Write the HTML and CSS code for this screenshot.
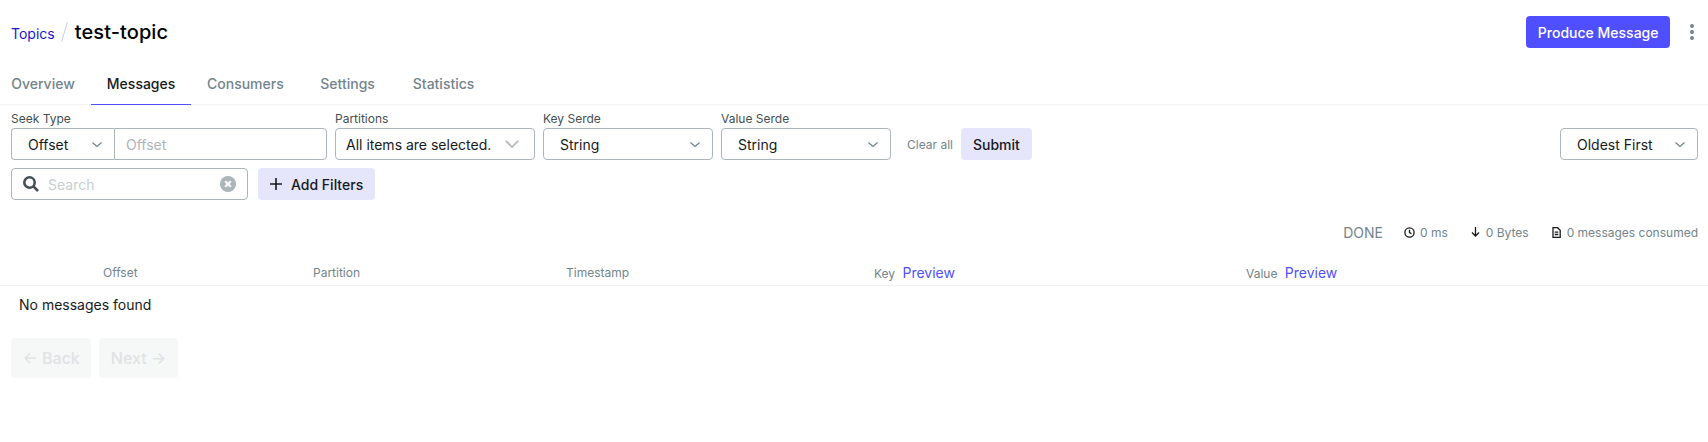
FILE: index.html
```html
<!DOCTYPE html>
<html lang="en">
<head>
    <meta charset="UTF-8">
    <title>test-topic - Messages</title>
    <link rel="stylesheet" href="styles.css">
</head>
<body>
    <header class="page-header">
        <div class="breadcrumb">
            <a class="breadcrumb-link" href="#">Topics</a>
            <span class="breadcrumb-sep"></span>
            <h1 class="page-title">test-topic</h1>
        </div>
        <div class="header-actions">
            <button class="btn btn-primary" type="button">Produce Message</button>
            <button class="kebab" type="button" aria-label="More">
                <svg width="4" height="16" viewBox="0 0 4 16"><circle cx="2" cy="2" r="2"/><circle cx="2" cy="8" r="2"/><circle cx="2" cy="14" r="2"/></svg>
            </button>
        </div>
    </header>

    <nav class="tabs">
        <a class="tab" href="#">Overview</a>
        <a class="tab active" href="#">Messages</a>
        <a class="tab" href="#">Consumers</a>
        <a class="tab" href="#">Settings</a>
        <a class="tab" href="#">Statistics</a>
    </nav>

    <form class="filters">
        <div class="filter-row">
            <div class="field">
                <label class="field-label">Seek Type</label>
                <div class="seek-group">
                    <div class="select seek-select">
                        <span class="select-value">Offset</span>
                        <svg class="chevron" width="10" height="5" viewBox="0 0 10 5"><path d="M.5.5 5 4.5 9.500.5"/></svg>
                    </div>
                    <div class="seek-input">Offset</div>
                </div>
            </div>
            <div class="field">
                <label class="field-label">Partitions</label>
                <div class="select partitions-select">
                    <span class="select-value">All items are selected.</span>
                    <svg class="chevron chevron-big" width="14" height="8" viewBox="0 0 14 8"><path d="M.7.7 7 7 13.300.7"/></svg>
                </div>
            </div>
            <div class="field">
                <label class="field-label">Key Serde</label>
                <div class="select serde-select">
                    <span class="select-value">String</span>
                    <svg class="chevron" width="10" height="5" viewBox="0 0 10 5"><path d="M.5.5 5 4.5 9.500.5"/></svg>
                </div>
            </div>
            <div class="field">
                <label class="field-label">Value Serde</label>
                <div class="select serde-select">
                    <span class="select-value">String</span>
                    <svg class="chevron" width="10" height="5" viewBox="0 0 10 5"><path d="M.5.5 5 4.5 9.500.5"/></svg>
                </div>
            </div>
            <a class="clear-all" href="#">Clear all</a>
            <button class="btn btn-secondary" type="button">Submit</button>
            <div class="select sort-select">
                <span class="select-value">Oldest First</span>
                <svg class="chevron" width="10" height="5" viewBox="0 0 10 5"><path d="M.5.5 5 4.5 9.500.5"/></svg>
            </div>
        </div>
        <div class="search-row">
            <div class="search">
                <svg class="search-icon" width="16" height="16" viewBox="0 0 16 16"><circle cx="6.500" cy="6.500" r="5.200"/><path d="M10.400 10.400 15 15"/></svg>
                <span class="search-placeholder">Search</span>
                <svg class="search-clear" width="16" height="16" viewBox="0 0 16 16"><circle cx="8" cy="8" r="8"/><path d="M5.200 5.200l5.600 5.600M10.800 5.200l-5.600 5.600"/></svg>
            </div>
            <button class="btn btn-secondary btn-add" type="button">
                <svg class="plus" width="12" height="12" viewBox="0 0 12 12"><path d="M6 0v12M0 6h12"/></svg>
                Add Filters
            </button>
        </div>
    </form>

    <div class="meta">
        <span class="meta-status">DONE</span>
        <span class="meta-item">
            <svg width="11" height="11" viewBox="0 0 11 11"><circle cx="5.500" cy="5.500" r="4.600"/><path d="M5.500 2.800v2.900l1.900 1"/></svg>
            0 ms
        </span>
        <span class="meta-item">
            <svg width="9" height="10" viewBox="0 0 9 10"><path d="M4.500 0v9M1 5.500 4.500 9 8 5.500"/></svg>
            0 Bytes
        </span>
        <span class="meta-item">
            <svg width="9" height="11" viewBox="0 0 9 11"><path d="M1 .7h4.600L8.200 3.300V10.300H1zM2.700 5.200h3.600M2.700 7.500h3.600"/></svg>
            0 messages consumed
        </span>
    </div>

    <table class="messages">
        <colgroup>
            <col class="col-toggle">
            <col class="col-offset">
            <col class="col-partition">
            <col class="col-timestamp">
            <col class="col-key">
            <col>
        </colgroup>
        <thead>
            <tr>
                <th></th>
                <th>Offset</th>
                <th>Partition</th>
                <th>Timestamp</th>
                <th>Key <a class="preview" href="#">Preview</a></th>
                <th>Value <a class="preview" href="#">Preview</a></th>
            </tr>
        </thead>
        <tbody>
            <tr>
                <td class="empty" colspan="6">No messages found</td>
            </tr>
        </tbody>
    </table>

    <div class="pager">
        <button class="btn btn-disabled" type="button" disabled>&larr; Back</button>
        <button class="btn btn-disabled" type="button" disabled>Next &rarr;</button>
    </div>
</body>
</html>
```

FILE: styles.css
```css
* {
    box-sizing: border-box;
}
body {
    margin: 0;
    font-family: Inter, "Liberation Sans", sans-serif;
    font-size: 14px;
    color: #171a1c;
    background-color: #fff;
}
button {
    font-family: inherit;
}
a {
    text-decoration: none;
}

.page-header {
    display: flex;
    justify-content: space-between;
    align-items: center;
    height: 64px;
    padding: 0 10px 0 11px;
}
.breadcrumb {
    display: flex;
    align-items: center;
}
.breadcrumb-link {
    color: #1717cf;
    font-size: 14px;
    line-height: 20px;
    margin-top: 3px;
}
.breadcrumb-sep {
    width: 1px;
    height: 20px;
    margin: 0 10px 0 9px;
    background-color: #c7ced1;
    transform: rotate(17deg);
}
.page-title {
    margin: 0;
    font-size: 20px;
    line-height: 32px;
    font-weight: 500;
    letter-spacing: .1px;
    color: #000;
}
.header-actions {
    display: flex;
    align-items: center;
}
.kebab {
    display: flex;
    align-items: center;
    justify-content: center;
    width: 24px;
    height: 32px;
    margin: 0 -6px 0 10px;
    padding: 0;
    border: none;
    background: none;
}
.kebab svg {
    fill: #73848c;
}

.btn {
    height: 32px;
    padding: 0 12px;
    border: none;
    border-radius: 4px;
    font-size: 14px;
    font-weight: 500;
}
.btn-primary {
    padding: 0 11.5px;
    background-color: #4f4fff;
    color: #fff;
}
.btn-secondary {
    background-color: #e5e5fc;
    color: #171a1c;
}
.btn-disabled {
    height: 40px;
    padding: 0 11.5px;
    background-color: #f6f7f7;
    color: #dfe3e5;
    font-size: 16px;
}

.tabs {
    display: flex;
    height: 41px;
    margin-left: -5px;
    border-bottom: 1px solid #f1f2f3;
}
.tabs .tab {
    display: flex;
    align-items: center;
    justify-content: center;
    min-width: 96px;
    padding: 0 15.85px 1px;
    color: #73848c;
    font-weight: 500;
}
.tabs .tab.active {
    color: #171a1c;
    border-bottom: 1px solid #4f4fff;
    margin-bottom: -1px;
}

.filters {
    padding: 6px 10px 0 11px;
}
.filter-row {
    display: flex;
    align-items: flex-end;
}
.field {
    margin-right: 8px;
}
.field-label {
    display: block;
    margin-bottom: 1px;
    font-size: 12px;
    line-height: 16px;
    font-weight: 400;
    color: #454f54;
}
.select {
    display: flex;
    align-items: center;
    justify-content: space-between;
    height: 32px;
    border: 1px solid #abb5ba;
    border-radius: 4px;
    background-color: #fff;
}
.chevron {
    fill: none;
    stroke: #73848c;
    stroke-width: 1.2;
}
.chevron-big {
    stroke: #abb5ba;
    stroke-width: 1.6;
}
.seek-group {
    display: flex;
}
.seek-select {
    width: 103px;
    padding: 0 12px 0 16px;
    border-right: none;
    border-radius: 4px 0 0 4px;
}
.seek-input {
    width: 213px;
    height: 32px;
    padding: 1px 11px 0;
    line-height: 30px;
    border: 1px solid #abb5ba;
    border-radius: 0 4px 4px 0;
    color: #abb5ba;
}
.partitions-select {
    width: 200px;
    padding: 0 15px 0 10px;
}
.partitions-select .select-value {
    margin-top: 1px;
}
.serde-select {
    width: 170px;
    padding: 0 12px 0 16px;
}
.clear-all {
    margin: 0 8px 0 8px;
    padding-top: 2px;
    font-size: 12px;
    line-height: 30px;
    color: #73848c;
}
.sort-select {
    width: 138px;
    margin-left: auto;
    padding: 0 12px 0 16px;
}

.search-row {
    display: flex;
    gap: 10px;
    margin-top: 8px;
}
.search {
    display: flex;
    align-items: center;
    width: 237px;
    height: 32px;
    padding: 0 11px;
    border: 1px solid #abb5ba;
    border-radius: 4px;
}
.search-icon {
    fill: none;
    stroke: #454f54;
    stroke-width: 2.6;
}
.search-placeholder {
    flex: 1;
    margin-left: 9px;
    color: #c7ced1;
}
.search-clear {
    fill: #abb5ba;
    stroke: #fff;
    stroke-width: 2.2;
}
.search-clear circle {
    stroke: none;
}
.btn-add {
    display: flex;
    align-items: center;
    gap: 9px;
    padding: 0 12px;
}
.plus {
    fill: none;
    stroke: #171a1c;
    stroke-width: 1.6;
}

.meta {
    display: flex;
    justify-content: flex-end;
    align-items: center;
    gap: 23px;
    height: 16px;
    margin-top: 24px;
    padding-right: 10px;
    font-size: 12px;
    color: #73848c;
}
.meta-status {
    margin-right: -2px;
    font-size: 14px;
}
.meta-item {
    display: flex;
    align-items: center;
    gap: 6px;
}
.meta-item:nth-child(2) {
    gap: 5px;
}
.meta-item svg {
    fill: none;
    stroke: #171a1c;
    stroke-width: 1.3;
}

.messages {
    width: 100%;
    margin-top: 20px;
    table-layout: fixed;
    border-collapse: collapse;
}
.col-toggle {
    width: 103px;
}
.col-offset {
    width: 210px;
}
.col-partition {
    width: 253px;
}
.col-timestamp {
    width: 308px;
}
.col-key {
    width: 372px;
}
.messages th {
    height: 25px;
    padding: 0;
    text-align: left;
    font-size: 12px;
    font-weight: 400;
    color: #73848c;
    border-bottom: 1px solid #f1f2f3;
}
.preview {
    margin-left: 4px;
    font-size: 14px;
    color: #4f4fff;
}
.empty {
    height: 40px;
    padding: 0 0 2px 19px;
    color: #171a1c;
}

.pager {
    display: flex;
    gap: 8px;
    margin-top: 13px;
    padding-left: 11px;
}
```
